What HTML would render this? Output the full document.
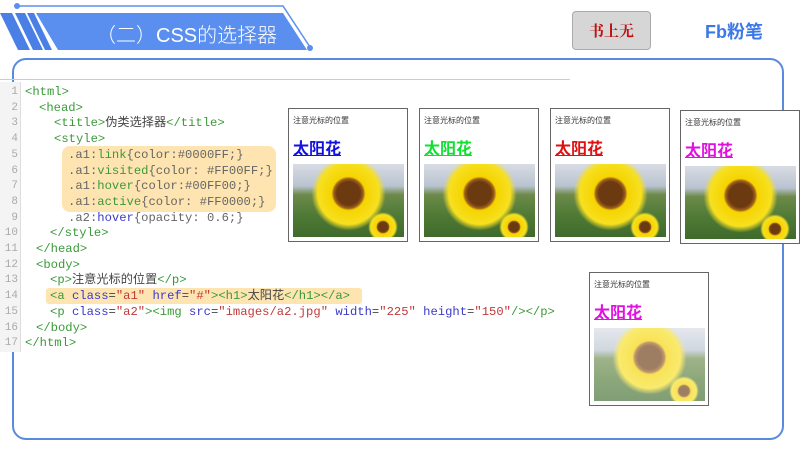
<!DOCTYPE html>
<html><head><meta charset="utf-8"><style>
body{margin:0;width:800px;height:450px;background:#fff;position:relative;overflow:hidden;font-family:"Liberation Sans","Noto Sans CJK SC",sans-serif}
.abs{position:absolute}
.code{position:absolute;left:0;top:85px;font-family:"Liberation Mono","Noto Sans CJK SC",monospace;font-size:12.2px;line-height:15.7px;color:#444}
.ln{position:absolute;left:0;width:18px;text-align:right;color:#aaa;font-size:11px}
.l{position:absolute;white-space:pre}
.g{color:#3a9a3a}.b{color:#3b3bc8}.r{color:#c03a3a}.k{color:#666}
.panel{position:absolute;width:118px;height:132px;border:1px solid #666;background:#fff}
.panel .t{position:absolute;left:4px;top:6px;font-size:8px;color:#333}
.panel .h{position:absolute;left:4px;top:26px;font-size:16px;font-weight:bold;text-decoration:underline}
.img{position:absolute;left:4px;top:55px;width:111px;height:73px;overflow:hidden;
background:linear-gradient(#d8dce4 0%,#b9c3d0 30%,#6d8a4a 42%,#4f7a35 70%,#3f6a2c 100%)}
.sun{position:absolute;border-radius:50%;background:radial-gradient(circle,#6b3a10 0 22%,#a0601a 28%,#f5d400 32%,#f7e020 58%,rgba(240,210,0,0) 70%)}
</style></head><body>
<svg class="abs" style="left:0;top:0" width="330" height="60">
<polygon points="36,13 283,13 307,50 58,50" fill="#5a8ff0"/>
<polygon points="0,13 12,13 30,50 18,50" fill="#4a7fe6"/>
<polygon points="15,13 25,13 43,50 33,50" fill="#4a7fe6"/>
<polygon points="27,13 34,13 52,50 45,50" fill="#4a7fe6"/>
<polyline points="17,6 283,6 310,47" fill="none" stroke="#5a8ff0" stroke-width="1.5"/>
<circle cx="17" cy="6" r="3" fill="#5a8ff0"/><circle cx="310" cy="48" r="3" fill="#5a8ff0"/>
</svg>
<div class="abs" style="left:96px;top:19px;font-size:20px;color:#fff;font-weight:300">（二）CSS的选择器</div>
<div class="abs" style="left:572px;top:11px;width:77px;height:37px;background:#d6d6d6;border:1px solid #aaa;border-radius:4px;color:#c01010;font-size:15px;font-weight:bold;text-align:center;line-height:37px;font-family:'Noto Serif CJK SC',serif">书上无</div>
<div class="abs" style="left:705px;top:18px;font-size:18px;font-weight:bold;color:#3c78e8">Fb粉笔</div>
<div class="abs" style="left:12px;top:58px;width:768px;height:378px;border:2px solid #5a8ae0;border-radius:14px"></div>
<div class="abs" style="left:0;top:79px;width:570px;height:1px;background:#ccc"></div>
<div class="abs" style="left:0;top:82px;width:20px;height:270px;background:#f4f4f4;border-right:1px solid #ddd"></div>
<div class="abs" style="left:62px;top:146px;width:214px;height:66px;background:#fde4b0;border-radius:8px"></div>
<div class="abs" style="left:46px;top:288px;width:316px;height:16px;background:#fde4b0;border-radius:3px"></div>
<div class="code">
<div class="ln" style="top:0">1<br>2<br>3<br>4<br>5<br>6<br>7<br>8<br>9<br>10<br>11<br>12<br>13<br>14<br>15<br>16<br>17</div>
<div class="l g" style="left:25px;top:0">&lt;html&gt;</div>
<div class="l g" style="left:39px;top:15.7px">&lt;head&gt;</div>
<div class="l" style="left:54px;top:31.4px"><span class="g">&lt;title&gt;</span>伪类选择器<span class="g">&lt;/title&gt;</span></div>
<div class="l g" style="left:54px;top:47.1px">&lt;style&gt;</div>
<div class="l k" style="left:68px;top:62.8px">.a1:<span class="g">link</span>{color:#0000FF;}</div>
<div class="l k" style="left:68px;top:78.5px">.a1:<span class="g">visited</span>{color: #FF00FF;}</div>
<div class="l k" style="left:68px;top:94.2px">.a1:<span class="g">hover</span>{color:#00FF00;}</div>
<div class="l k" style="left:68px;top:109.9px">.a1:<span class="g">active</span>{color: #FF0000;}</div>
<div class="l k" style="left:68px;top:125.6px">.a2:<span class="b">hover</span>{opacity: 0.6;}</div>
<div class="l g" style="left:50px;top:141.3px">&lt;/style&gt;</div>
<div class="l g" style="left:36px;top:157px">&lt;/head&gt;</div>
<div class="l g" style="left:36px;top:172.7px">&lt;body&gt;</div>
<div class="l" style="left:50px;top:188.4px"><span class="g">&lt;p&gt;</span>注意光标的位置<span class="g">&lt;/p&gt;</span></div>
<div class="l" style="left:50px;top:204.1px"><span class="g">&lt;a </span><span class="b">class</span>=<span class="r">"a1"</span> <span class="b">href</span>=<span class="r">"#"</span><span class="g">&gt;&lt;h1&gt;</span>太阳花<span class="g">&lt;/h1&gt;&lt;/a&gt;</span></div>
<div class="l" style="left:50px;top:219.8px"><span class="g">&lt;p </span><span class="b">class</span>=<span class="r">"a2"</span><span class="g">&gt;&lt;img </span><span class="b">src</span>=<span class="r">"images/a2.jpg"</span> <span class="b">width</span>=<span class="r">"225"</span> <span class="b">height</span>=<span class="r">"150"</span><span class="g">/&gt;&lt;/p&gt;</span></div>
<div class="l g" style="left:36px;top:235.5px">&lt;/body&gt;</div>
<div class="l g" style="left:25px;top:251.2px">&lt;/html&gt;</div>
</div>

<div class="panel" style="left:288px;top:108px"><div class="t">注意光标的位置</div><div class="h" style="color:#1010e0">太阳花</div><div class="img"><div class="sun" style="left:18px;top:-8px;width:75px;height:75px"></div><div class="sun" style="left:75px;top:48px;width:30px;height:30px"></div></div></div>
<div class="panel" style="left:419px;top:108px"><div class="t">注意光标的位置</div><div class="h" style="color:#10e030">太阳花</div><div class="img"><div class="sun" style="left:18px;top:-8px;width:75px;height:75px"></div><div class="sun" style="left:75px;top:48px;width:30px;height:30px"></div></div></div>
<div class="panel" style="left:550px;top:108px"><div class="t">注意光标的位置</div><div class="h" style="color:#e01010">太阳花</div><div class="img"><div class="sun" style="left:18px;top:-8px;width:75px;height:75px"></div><div class="sun" style="left:75px;top:48px;width:30px;height:30px"></div></div></div>
<div class="panel" style="left:680px;top:110px"><div class="t">注意光标的位置</div><div class="h" style="color:#e010e0">太阳花</div><div class="img"><div class="sun" style="left:18px;top:-8px;width:75px;height:75px"></div><div class="sun" style="left:75px;top:48px;width:30px;height:30px"></div></div></div>
<div class="panel" style="left:589px;top:272px"><div class="t">注意光标的位置</div><div class="h" style="color:#e010e0">太阳花</div><div class="img" style="opacity:0.65"><div class="sun" style="left:18px;top:-8px;width:75px;height:75px"></div><div class="sun" style="left:75px;top:48px;width:30px;height:30px"></div></div></div>
</body></html>
